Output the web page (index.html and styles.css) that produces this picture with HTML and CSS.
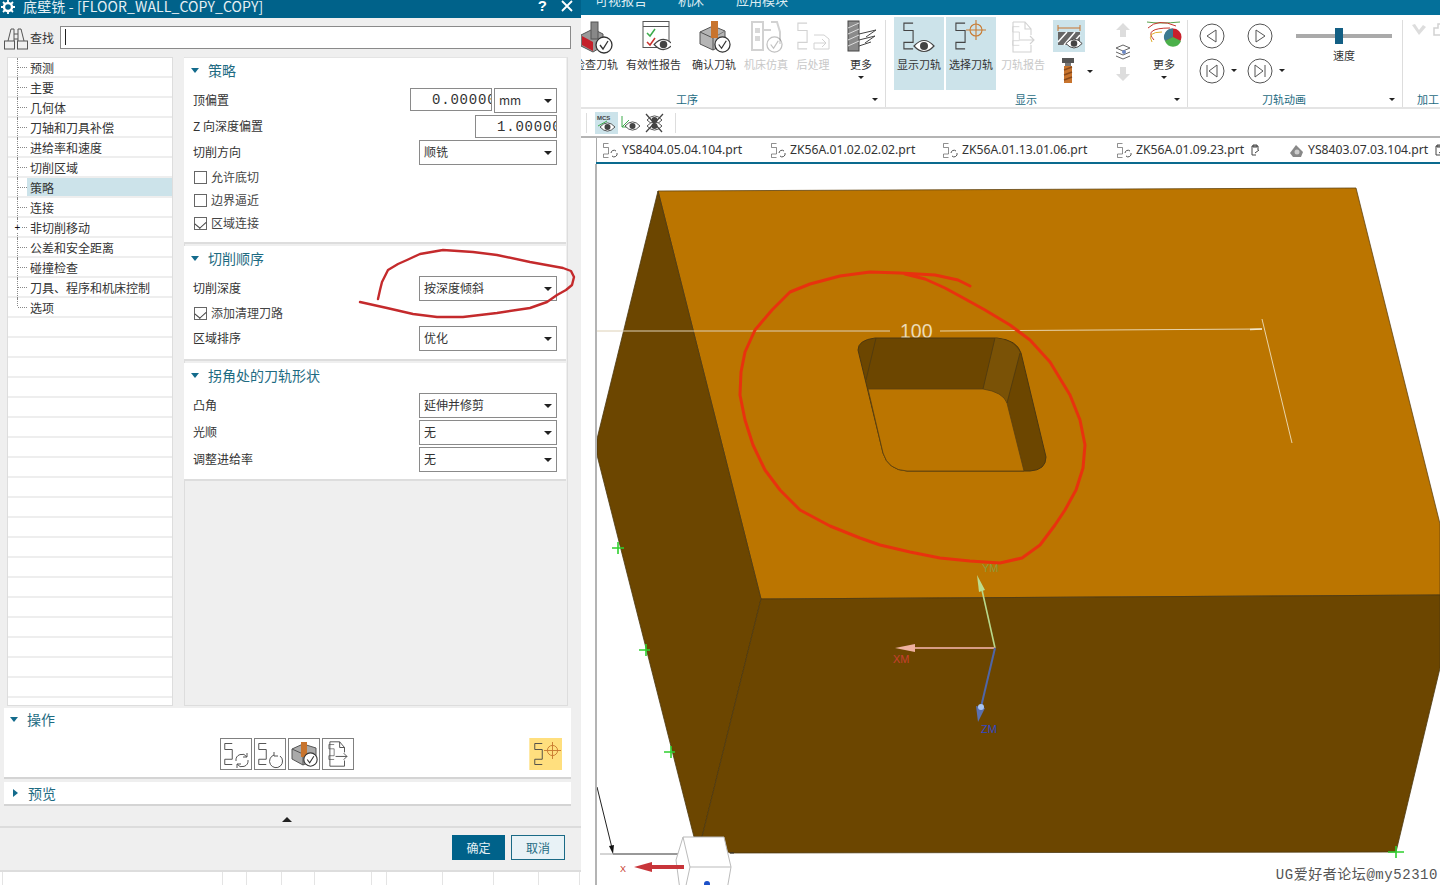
FILE: index.html
```html
<!DOCTYPE html>
<html lang="zh">
<head>
<meta charset="utf-8">
<title>底壁铣</title>
<link rel="stylesheet" href="styles.css">
</head>
<body>
<svg class="defs" width="0" height="0" aria-hidden="true">
  <symbol id="zz" viewBox="0 0 12 30"><path d="M11 1H1V9H11V22H1V29H11" fill="none" stroke="currentColor" stroke-width="1.2"/></symbol>
  <symbol id="eye" viewBox="0 0 22 16"><path d="M1 8Q11-3 21 8 11 19 1 8Z" fill="#fff" stroke="#444" stroke-width="1.2"/><circle cx="11" cy="8" r="4" fill="#444"/></symbol>
  <symbol id="chk" viewBox="0 0 18 18"><circle cx="9" cy="9" r="8" fill="#fff" stroke="#333" stroke-width="1.3"/><path d="M5 9l3 4 5-8" fill="none" stroke="#333" stroke-width="1.3"/></symbol>
  <symbol id="cross" viewBox="0 0 20 20"><circle cx="10" cy="10" r="6" fill="none" stroke="#c87a30" stroke-width="1.1"/><path d="M0 10H20M10 0V20" stroke="#c87a30" stroke-width="1.1"/></symbol>
  <symbol id="doc" viewBox="0 0 26 32"><path d="M3 1H15L21 8V14M3 1V31H21V24M15 1V8H21M10 19H24M20 15l4 4-4 4" fill="none" stroke="currentColor" stroke-width="1.1"/></symbol>
  <symbol id="mill" viewBox="0 0 14 26"><rect x="1" y="0" width="12" height="5" fill="#555"/><rect x="4" y="5" width="6" height="3" fill="#777"/><rect x="3" y="8" width="8" height="17" fill="#c8742e"/><path d="M3 12l8-3M3 17l8-3M3 22l8-3" stroke="#8a4a1a" stroke-width="1.4"/></symbol>
</svg>

<div class="app">
  <section class="dialog">
    <header class="dlg-title">
      <svg class="gear" viewBox="0 0 14 14" width="14" height="14"><circle cx="7" cy="7" r="4" fill="none" stroke="#fff" stroke-width="2.4"/><path d="M7 0V3M7 11V14M0 7H3M11 7H14M2 2L4 4M10 10L12 12M12 2L10 4M4 10L2 12" stroke="#fff" stroke-width="1.8"/></svg>
      <span class="dlg-name">底壁铣 - [FLOOR_WALL_COPY_COPY]</span>
      <span class="dlg-help">?</span>
      <svg class="dlg-x" viewBox="0 0 12 12" width="12" height="12"><path d="M1 1L11 11M11 1L1 11" stroke="#fff" stroke-width="1.8"/></svg>
    </header>

    <div class="find">
      <svg viewBox="0 0 24 24" width="24" height="24"><path d="M4 15L7 3H10V15M14 15V3H17L20 15M10 8H14M10 13H14" fill="none" stroke="#555"/><rect x=".5" y="15" width="10" height="8" fill="none" stroke="#555"/><rect x="13.500" y="15" width="10" height="8" fill="none" stroke="#555"/></svg>
      <span class="find-label">查找</span>
      <div class="find-input"><i class="caret-bar"></i></div>
    </div>

    <div class="dlg-main">
      <ul class="tree">
        <li><i class="twig"></i><span>预测</span></li>
        <li><i class="twig"></i><span>主要</span></li>
        <li><i class="twig"></i><span>几何体</span></li>
        <li><i class="twig"></i><span>刀轴和刀具补偿</span></li>
        <li><i class="twig"></i><span>进给率和速度</span></li>
        <li><i class="twig"></i><span>切削区域</span></li>
        <li class="sel"><i class="twig"></i><span>策略</span></li>
        <li><i class="twig"></i><span>连接</span></li>
        <li><i class="twig"><b class="plus">+</b></i><span>非切削移动</span></li>
        <li><i class="twig"></i><span>公差和安全距离</span></li>
        <li><i class="twig"></i><span>碰撞检查</span></li>
        <li><i class="twig"></i><span>刀具、程序和机床控制</span></li>
        <li><i class="twig end"></i><span>选项</span></li>
        <li></li><li></li><li></li><li></li><li></li><li></li><li></li><li></li><li></li><li></li>
        <li></li><li></li><li></li><li></li><li></li><li></li><li></li><li></li><li></li><li></li>
      </ul>

      <div class="panel">
        <section class="sec sec-a">
          <h3 class="sec-title"><i class="tri-d"></i>策略</h3>
          <div class="row"><label>顶偏置</label><div class="pair"><div class="num num-a">0.00000</div><div class="sel-box unit"><span>mm</span><i class="tri-s"></i></div></div></div>
          <div class="row"><label>Z 向深度偏置</label><div class="num">1.00000</div></div>
          <div class="row"><label>切削方向</label><div class="sel-box"><span>顺铣</span><i class="tri-s"></i></div></div>
          <div class="checks">
            <div class="check"><i class="cb"></i><span>允许底切</span></div>
            <div class="check"><i class="cb"></i><span>边界逼近</span></div>
            <div class="check"><i class="cb on"></i><span>区域连接</span></div>
          </div>
        </section>
        <section class="sec sec-b">
          <h3 class="sec-title"><i class="tri-d"></i>切削顺序</h3>
          <div class="row"><label>切削深度</label><div class="sel-box"><span>按深度倾斜</span><i class="tri-s"></i></div></div>
          <div class="check tall"><i class="cb on"></i><span>添加清理刀路</span></div>
          <div class="row flush"><label>区域排序</label><div class="sel-box"><span>优化</span><i class="tri-s"></i></div></div>
        </section>
        <section class="sec sec-c">
          <h3 class="sec-title"><i class="tri-d"></i>拐角处的刀轨形状</h3>
          <div class="row"><label>凸角</label><div class="sel-box"><span>延伸并修剪</span><i class="tri-s"></i></div></div>
          <div class="row"><label>光顺</label><div class="sel-box"><span>无</span><i class="tri-s"></i></div></div>
          <div class="row"><label>调整进给率</label><div class="sel-box"><span>无</span><i class="tri-s"></i></div></div>
        </section>
      </div>
    </div>

    <section class="ops">
      <h3 class="sec-title"><i class="tri-d"></i>操作</h3>
      <div class="op-row">
        <div class="op-icons">
          <div class="op"><svg viewBox="0 0 30 30" width="30" height="30"><use href="#zz" x="3" y="3" width="9" height="24" color="#444"/><path d="M15 22A6 6 0 0 1 26 18M27 21A6 6 0 0 1 16 25M26 14V18H22M16 29V25H20" fill="none" stroke="#555"/></svg></div>
          <div class="op"><svg viewBox="0 0 30 30" width="30" height="30"><use href="#zz" x="3" y="3" width="9" height="24" color="#444"/><path d="M25 17A6.500 6.500 0 1 1 19 16M19 13V17H23" fill="none" stroke="#555"/></svg></div>
          <div class="op"><svg viewBox="0 0 30 30" width="30" height="30"><path d="M3 10L14 5 27 9V20L14 26 3 20Z" fill="#aaa" stroke="#555"/><path d="M3 10L14 15V26" fill="none" stroke="#555"/><rect x="12" y="3" width="6" height="15" fill="#c8742e"/><use href="#chk" x="14" y="13" width="15" height="15"/></svg></div>
          <div class="op"><svg viewBox="0 0 30 30" width="30" height="30"><use href="#doc" x="3" y="2" width="24" height="26" color="#444"/><use href="#zz" x="5" y="5" width="7" height="16" color="#444"/></svg></div>
        </div>
        <div class="op-pick"><svg viewBox="0 0 30 30" width="30" height="30"><use href="#zz" x="3" y="3" width="9" height="24" color="#444"/><use href="#cross" x="13" y="3" width="17" height="17"/></svg></div>
      </div>
    </section>
    <section class="preview">
      <h3 class="sec-title"><i class="tri-r"></i>预览</h3>
    </section>
    <div class="collapse"><i class="tri-u"></i></div>
    <footer class="dlg-foot">
      <button class="btn ok">确定</button>
      <button class="btn cancel">取消</button>
    </footer>
    <div class="strip"><i></i><i></i><i></i><i></i><i></i><i></i><i></i><i></i><i></i><i></i><i></i></div>
  </section>

  <main class="work">
    <nav class="topbar"><span>可视报告</span><span>机床</span><span>应用模块</span></nav>

    <div class="ribbon">
      <section class="group g1">
        <div class="btns">
          <div class="rb first">
            <svg class="ic" viewBox="0 0 34 34"><path d="M2 15L14 9 24 14V26L14 32 2 26Z" fill="#999" stroke="#555"/><path d="M3 16L14 22V31L3 25Z" fill="#c4202a"/><rect x="12" y="2" width="7" height="17" fill="#888" stroke="#555"/><use href="#chk" x="16" y="16" width="18" height="18"/></svg>
            <span>检查刀轨</span>
          </div>
          <div class="rb">
            <svg class="ic" viewBox="0 0 34 34"><rect x="6" y="1.500" width="26" height="26" fill="#fff" stroke="#555"/><path d="M6 6.500H32" stroke="#555"/><path d="M10 13l3 3 5-7" fill="none" stroke="#3cab4a" stroke-width="1.500"/><path d="M10 22l3 3 5-7" fill="none" stroke="#c9302c" stroke-width="1.500"/><use href="#eye" x="16" y="17" width="21" height="15"/></svg>
            <span>有效性报告</span>
          </div>
          <div class="rb m3">
            <svg class="ic" viewBox="0 0 34 34"><path d="M3 12L16 6 28 11V24L16 30 3 24Z" fill="#b5b5b5" stroke="#555"/><path d="M3 12L16 18V30" fill="none" stroke="#555"/><path d="M16 18L28 11" stroke="#777"/><rect x="14" y="1" width="7" height="17" fill="#c8742e"/><use href="#chk" x="17" y="16" width="17" height="17"/></svg>
            <span>确认刀轨</span>
          </div>
          <div class="rb off">
            <svg class="ic" viewBox="0 0 34 34"><path d="M3 2H14V30H3ZM14 10H22M22 2H28L31 12V24" fill="none" stroke="#d2d2d2" stroke-width="2"/><rect x="6" y="8" width="5" height="5" fill="#d8d8d8"/><rect x="6" y="16" width="5" height="5" fill="#d8d8d8"/><use href="#chk" x="17" y="16" width="17" height="17" opacity=".3"/></svg>
            <span>机床仿真</span>
          </div>
          <div class="rb off">
            <svg class="ic" viewBox="0 0 34 34"><use href="#zz" x="1" y="1" width="11" height="30" color="#d2d2d2"/><path d="M18 17H28L33 21V31H18V25M18 25H30M26 21l4 4-4 4" transform="translate(0 -2)" fill="none" stroke="#d2d2d2"/></svg>
            <span>后处理</span>
          </div>
          <div class="rb more">
            <svg class="ic" viewBox="0 0 34 34"><rect x="4" y="1" width="11" height="30" fill="#8b8b8b" stroke="#444"/><path d="M4 8L15 3M4 14L15 9M4 20L15 15M4 26L15 21" stroke="#ddd"/><path d="M15 14L32 10 22 17M15 20L31 16 21 23M15 26L27 22" fill="none" stroke="#444"/></svg>
            <span>更多</span><i class="tri-s"></i>
          </div>
        </div>
        <div class="foot"><span class="ft-1">工序</span><i class="tri-s"></i></div>
      </section>

      <section class="group g2">
        <div class="btns">
          <div class="rb on">
            <svg class="ic" viewBox="0 0 34 34"><use href="#zz" x="1" y="1" width="11" height="30" color="#444"/><use href="#eye" x="11" y="18" width="22" height="16"/></svg>
            <span>显示刀轨</span>
          </div>
          <div class="rb on">
            <svg class="ic" viewBox="0 0 34 34"><use href="#zz" x="1" y="1" width="11" height="30" color="#444"/><use href="#cross" x="12" y="0" width="20" height="20"/></svg>
            <span>选择刀轨</span>
          </div>
          <div class="rb off">
            <svg class="ic" viewBox="0 0 34 34"><use href="#doc" x="3" y="1" width="28" height="32" color="#d2d2d2"/><use href="#zz" x="6" y="6" width="8" height="20" color="#d2d2d2"/></svg>
            <span>刀轨报告</span>
          </div>
          <div class="stack">
            <div class="view-on"><svg viewBox="0 0 32 32" width="32" height="32"><path d="M5 8H27M5 5V11M27 5V11" stroke="#c8742e"/><rect x="5" y="12" width="22" height="13" fill="#666"/><path d="M5 22L14 12M11 25L22 12M18 25L27 15" stroke="#fff" stroke-width="1.500"/><use href="#eye" x="12" y="17" width="18" height="13"/></svg></div>
            <div class="drill"><svg viewBox="0 0 14 26" width="14" height="26"><use href="#mill" width="14" height="26"/></svg><i class="tri-s"></i></div>
          </div>
          <div class="arrows">
            <svg viewBox="0 0 16 16" width="16" height="16"><path d="M8 1L15 8H11V15H5V8H1Z" fill="#ddd"/></svg>
            <svg viewBox="0 0 16 16" width="16" height="16"><path d="M8 1L15 4 8 7 1 4ZM1 8L8 11 15 8M1 12L8 15 15 12" fill="none" stroke="#666"/><circle cx="9" cy="8" r="2" fill="#6d89c4"/></svg>
            <svg viewBox="0 0 16 16" width="16" height="16"><path d="M8 15L15 8H11V1H5V8H1Z" fill="#ddd"/></svg>
          </div>
          <div class="rb more">
            <svg class="ic wide" viewBox="0 0 36 34"><path d="M1 2Q14 4 34 2" fill="none" stroke="#5aa04a"/><path d="M2 8Q12-2 30 6M8 20Q-3 8 24 8" fill="none" stroke="#c8362e"/><path d="M6 22Q0 12 16 12" fill="none" stroke="#e0b030"/><circle cx="27" cy="17" r="8.500" fill="#c8202a"/><path d="M27 17V8.500A8.500 8.500 0 0 0 19 21Z" fill="#3c7a90"/><path d="M27 17L19 21A8.500 8.500 0 0 0 35 21Z" fill="#4ab04a"/></svg>
            <span>更多</span><i class="tri-s"></i>
          </div>
        </div>
        <div class="foot"><span class="ft-2">显示</span><i class="tri-s"></i></div>
      </section>

      <section class="group g3">
        <div class="btns anim">
          <div class="players">
            <div class="play"><svg viewBox="0 0 26 26" width="26" height="26"><circle cx="13" cy="13" r="12" fill="none" stroke="#555"/><path d="M8 13L17 7V19Z" fill="none" stroke="#555"/></svg></div>
            <div class="play"><svg viewBox="0 0 26 26" width="26" height="26"><circle cx="13" cy="13" r="12" fill="none" stroke="#555"/><path d="M18 13L9 7V19Z" fill="none" stroke="#555"/></svg></div>
            <div class="play"><svg viewBox="0 0 26 26" width="26" height="26"><circle cx="13" cy="13" r="12" fill="none" stroke="#555"/><path d="M10 13L18 7V19ZM8 7V19" fill="none" stroke="#555"/></svg><i class="tri-s"></i></div>
            <div class="play"><svg viewBox="0 0 26 26" width="26" height="26"><circle cx="13" cy="13" r="12" fill="none" stroke="#555"/><path d="M16 13L8 7V19ZM18 7V19" fill="none" stroke="#555"/></svg><i class="tri-s"></i></div>
          </div>
          <div class="speed">
            <div class="slider"><i class="thumb"></i></div>
            <span>速度</span>
          </div>
        </div>
        <div class="foot"><span class="ft-3">刀轨动画</span><i class="tri-s"></i></div>
      </section>

      <section class="group g4">
        <div class="btns mach">
          <svg viewBox="0 0 16 16" width="16" height="16"><path d="M1 3L8 13 15 5 12 3 8 8 4 2Z" fill="#ddd"/></svg>
          <svg viewBox="0 0 16 16" width="16" height="16"><path d="M5 2H15V9H12V13H1V6H5Z" fill="none" stroke="#d2d2d2" stroke-width="1.500"/></svg>
        </div>
        <div class="foot"><span class="ft-4">加工</span></div>
      </section>
    </div>

    <div class="toolbar">
      <i class="tb-sep"></i>
      <div class="tb-ic on"><svg viewBox="0 0 22 22" width="22" height="22"><text x="2" y="8" class="mcs">MCS</text><use href="#eye" x="4" y="9" width="17" height="12"/><path d="M3 14L12 9" stroke="#3cab4a"/></svg></div>
      <div class="tb-ic"><svg viewBox="0 0 22 22" width="22" height="22"><path d="M3 4V15H14M3 15L10 8" fill="none" stroke="#3cab4a"/><use href="#eye" x="5" y="8" width="17" height="12"/></svg></div>
      <div class="tb-ic"><svg viewBox="0 0 22 22" width="22" height="22"><use href="#eye" x="3" y="2" width="17" height="12"/><use href="#eye" x="3" y="8" width="17" height="12"/><path d="M3 2L19 20M20 2L3 20" stroke="#444" stroke-width="1.300"/></svg></div>
      <i class="tb-sep"></i>
    </div>

    <div class="tabs">
      <div class="tab"><svg class="t-ic" viewBox="0 0 15 15" width="15" height="15"><use href="#zz" x="0" y="0" width="6" height="15" color="#444"/><path d="M8 10A3 3 0 0 1 13 8M14 10A3 3 0 0 1 9 13" fill="none" stroke="#555"/></svg><span>YS8404.05.04.104.prt</span></div>
      <div class="tab"><svg class="t-ic" viewBox="0 0 15 15" width="15" height="15"><use href="#zz" x="0" y="0" width="6" height="15" color="#444"/><path d="M8 10A3 3 0 0 1 13 8M14 10A3 3 0 0 1 9 13" fill="none" stroke="#555"/></svg><span>ZK56A.01.02.02.02.prt</span></div>
      <div class="tab"><svg class="t-ic" viewBox="0 0 15 15" width="15" height="15"><use href="#zz" x="0" y="0" width="6" height="15" color="#444"/><path d="M8 10A3 3 0 0 1 13 8M14 10A3 3 0 0 1 9 13" fill="none" stroke="#555"/></svg><span>ZK56A.01.13.01.06.prt</span></div>
      <div class="tab"><svg class="t-ic" viewBox="0 0 15 15" width="15" height="15"><use href="#zz" x="0" y="0" width="6" height="15" color="#444"/><path d="M8 10A3 3 0 0 1 13 8M14 10A3 3 0 0 1 9 13" fill="none" stroke="#555"/></svg><span>ZK56A.01.09.23.prt</span><svg class="t-doc" viewBox="0 0 10 12" width="10" height="12"><path d="M2 2H8V6M2 2V11H6M3 1H7V3H3ZM5 9L9 6" fill="none" stroke="#444"/></svg></div>
      <div class="tab"><svg class="t-ic" viewBox="0 0 15 15" width="15" height="15"><path d="M1 10L7 2 14 9 12 14 4 14Z" fill="#888"/><circle cx="8" cy="9" r="2.500" fill="#ccc"/></svg><span>YS8403.07.03.104.prt</span><svg class="t-doc" viewBox="0 0 10 12" width="10" height="12"><path d="M2 2H8V6M2 2V11H6M3 1H7V3H3ZM5 9L9 6" fill="none" stroke="#444"/></svg></div>
    </div>

    <div class="canvas">
      <svg class="model" viewBox="595 164 845 721" width="845" height="721">
        <polygon points="658,191 1356,188 1440,524 1440,595 761,599" fill="#bb7500" stroke="#5f4310" stroke-width=".8"/>
        <polygon points="658,191 761,599 702,837 694,837 597,455 597,439" fill="#6c4600" stroke="#4d3810" stroke-width=".8"/>
        <polygon points="761,599 1440,595 1440,668 1396,852 730,853 702,837" fill="#6c4600" stroke="#4d3810" stroke-width=".8"/>
        <path d="M597 331H890" stroke="#ddd0b5" stroke-width="1"/>
        <path d="M940 331L1262 329" stroke="#e8d4aa" stroke-width="1"/>
        <path d="M1250 329.500L1262 329" stroke="#f2e6cc" stroke-width="1.500"/>
        <path d="M1262 319L1292 443" stroke="#e8d4aa" stroke-width="1"/>
        <text x="900" y="338" class="dim">100</text>
        <path d="M858 350Q858 340 875 338H997Q1017 340 1021 353L1046 457Q1046 470 1030 471H907Q888 470 883 453Z" fill="#6c4600" stroke="#4d3810"/>
        <path d="M995 338Q1015 340 1020 353L1007 403Q1003 392 983 389Z" fill="#7a5206"/>
        <path d="M868 389H983Q1003 392 1007 403L1024 471H907Q888 470 883 453Z" fill="#bb7500" stroke="#5a4010" stroke-width=".8"/>
        <path d="M876 338L866 380M995 338L983 389M1020 353L1007 403" stroke="#4d3810" stroke-width=".8"/>
        <path d="M995 648L982 590" stroke="#b8d88a" stroke-width="1.600"/>
        <path d="M977 575L985 590 979 592Z" fill="#bddc8c"/>
        <path d="M995 648H915" stroke="#d69c84" stroke-width="1.800"/>
        <path d="M895 648L915 644V652Z" fill="#eeb0a0"/>
        <path d="M995 648L981 707" stroke="#4f66a8" stroke-width="2"/>
        <path d="M978 722L976 706 985 708Z" fill="#5a70b0"/>
        <circle cx="981" cy="707" r="3" fill="#a8c4f0"/>
        <text x="982" y="572" class="ax ax-y">YM</text>
        <text x="893" y="663" class="ax ax-x">XM</text>
        <text x="981" y="733" class="ax ax-z">ZM</text>
        <path d="M612 548H624M618 542V554M639 650H650M646 644V656M664 752H675M671 746V758M1388 852H1404M1396 846V858" stroke="#2fd02f" stroke-width="1.600"/>
        <path d="M600 854H613" stroke="#aaa"/>
        <path d="M613 854H680" stroke="#333"/>
        <path d="M730 853H734" stroke="#333"/>
        <path d="M597 787L612 848" stroke="#222"/>
        <path d="M613 854L609 846 614 845Z" fill="#111"/>
        <polygon points="683,837 724,837 731,867 727,890 680,890 676,860" fill="#fff" stroke="#bbb"/>
        <path d="M683 837L690 867 685 890M690 867H731" fill="none" stroke="#bbb"/>
        <path d="M684 867H651" stroke="#c8353a" stroke-width="4"/>
        <path d="M634 867L652 862V872Z" fill="#c8353a"/>
        <text x="620" y="872" class="ax ax-small">X</text>
        <circle cx="707" cy="884" r="3" fill="#1c50c8"/>
      </svg>
      <div class="mark">UG爱好者论坛@my52310</div>
    </div>
  </main>
</div>

<svg class="ink" viewBox="0 0 1440 885" width="1440" height="885" aria-hidden="true">
  <path class="ink-a" d="M378 299L380 290 382 282 388 270 398 264 407 260 420 254 443 250 473 252 497 255 530 262 563 268 571 271 574 277 572 285 566 290 557 295 547 302 530 308 497 313 463 317 437 317 413 314 387 308 360 302"/>
  <path class="ink-b" d="M970 286L958 280 935 275 900 273 870 272 840 276 810 284 790 292 772 310 755 330 745 352 741 372 740 395 745 420 753 445 765 470 780 490 800 510 830 526 860 538 880 545 910 552 940 558 970 561 1000 563 1022 558 1040 545 1055 525 1065 510 1076 490 1083 468 1085 445 1080 420 1070 395 1050 362 1030 340 1010 325 985 310 967 300 945 288 925 279 905 274"/>
</svg>
</body>
</html>
```
FILE: styles.css
```css
* { box-sizing: border-box; }
html, body { margin: 0; height: 885px; overflow: hidden; background: #fff; }
body { font: 12px/16px "Noto Sans CJK SC", "Noto Sans", sans-serif; color: #333; position: relative; }
i, b { font-style: normal; font-weight: normal; }
.defs { position: absolute; }
.app { display: flex; height: 885px; }

/* dialog */
.dialog { width: 581px; flex: none; display: flex; flex-direction: column; background: #efefef; }
.dlg-title { height: 18px; flex: none; background: #00628a; color: #fff; display: flex; align-items: center; padding: 0 8px 0 1px; overflow: hidden; }
.gear { margin: -5px 0 0 0; flex: none; }
.dlg-name { margin: -6px 0 0 8px; font-size: 14px; line-height: 18px; flex: 1; color: #e6f0f4; letter-spacing: .13px; }
.dlg-help { font: bold 15px/18px "Liberation Sans", sans-serif; margin: -6px 14px 0 0; }
.dlg-x { margin-top: -6px; }
.find { height: 39px; flex: none; display: flex; align-items: center; padding: 0 10px 0 4px; }
.find-label { margin: 0 6px 0 2px; width: 24px; }
.find-input { flex: 1; height: 23px; background: #fff; border: 1px solid #8a8a8a; padding: 2px 4px; }
.caret-bar { display: block; width: 1px; height: 16px; background: #222; }

.dlg-main { height: 649px; flex: none; display: flex; padding-left: 7px; }
.tree { list-style: none; margin: 0; padding: 0; width: 166px; height: 649px; overflow: hidden; background: #fff; border: 1px solid #ddd; flex: none; }
.tree li { height: 20px; display: flex; border-bottom: 2px solid #eee; position: relative; }
.tree li span { flex: 1; line-height: 19px; padding-left: 3px; }
.tree .sel { border-bottom-color: #eee; }
.tree .sel span { background: #cce3ea; }
.twig { width: 10px; margin-left: 9px; margin-bottom: -2px; flex: none; border-left: 1px dotted #888; position: relative; }
.twig::after { content: ""; position: absolute; left: 0; right: 0; top: 9px; border-top: 1px dotted #888; }
.twig.end { margin-bottom: 10px; }
.plus { position: absolute; left: -5px; top: 5px; width: 9px; height: 9px; background: #fff; font: 10px/9px "Liberation Sans", sans-serif; text-align: center; z-index: 1; color: #111; }

.panel { margin-left: 11px; width: 384px; height: 649px; border: 1px solid #ddd; border-top-color: #e4e4e4; display: flex; flex-direction: column; gap: 2px; background: #efefef; }
.sec { background: #fff; padding: 0 9px 0 8px; border-bottom: 2px solid #ddd; width: 382px; margin-left: -1px; }
.sec-a { padding-bottom: 7px; }
.sec-b { padding-bottom: 8px; }
.sec-c { padding-bottom: 7px; }
.sec-title { margin: 0; height: 26px; padding: 0 0 2px; font-size: 14px; font-weight: normal; color: #1e6b82; display: flex; align-items: center; gap: 9px; }
.sec-title + .row { margin-top: 4px; }
.tri-d { width: 0; height: 0; border: 4.500px solid transparent; border-top: 5px solid #136b8c; border-bottom: 0; margin-left: -1px; }
.tri-r { width: 0; height: 0; border: 4.500px solid transparent; border-left: 5px solid #136b8c; border-right: 0; margin-left: 2px; margin-right: 1px; }
.tri-u { display: block; width: 0; height: 0; border: 5px solid transparent; border-bottom: 5px solid #222; border-top: 0; }
.tri-s { display: block; width: 0; height: 0; border: 4px solid transparent; border-top: 4px solid #222; border-bottom: 0; flex: none; }
.row { display: flex; justify-content: space-between; align-items: center; margin-top: 2px; }
.row label { padding: 0 0 2px 1px; }
.row.flush { margin-top: 0; }
.pair { display: flex; gap: 2px; align-items: flex-start; }
.num { width: 82px; height: 23px; background: #fff; border: 1px solid #8a8a8a; font: 14px/22px "Liberation Mono", monospace; letter-spacing: .8px; color: #333; padding-left: 21px; overflow: hidden; white-space: nowrap; }
.num-a { width: 82px; }
.sel-box { width: 138px; height: 25px; background: #fff; border: 1px solid #8a8a8a; display: flex; align-items: center; justify-content: space-between; padding: 0 4px 0 4px; }
.sel-box span { padding-bottom: 1px; }
.sel-box.unit { width: 63px; }
.checks { margin-top: 1px; }
.check { height: 23px; display: flex; align-items: center; gap: 4px; padding-left: 2px; color: #444; }
.check span { padding-bottom: 2px; }
.check.tall { height: 25px; }
.cb { width: 13px; height: 13px; border: 1px solid #666; background: #fff; position: relative; flex: none; }
.cb.on::after { content: ""; position: absolute; left: 2px; top: 1px; width: 6px; height: 8px; border: solid #444; border-width: 0 1.300px 1.300px 0; transform: rotate(40deg) skewX(-8deg); }

.ops { margin: 2px 10px 0 4px; height: 71px; background: #fff; border-bottom: 2px solid #d4d4d4; padding: 0 9px 0 7px; flex: none; }
.ops .sec-title { height: 26px; padding-bottom: 4px; }
.op-row { display: flex; justify-content: space-between; margin-top: 4px; }
.op-icons { display: flex; gap: 2px; margin-left: 209px; }
.op { width: 32px; height: 32px; border: 1px solid #808080; background: #fff; }
.op svg, .op-pick svg { display: block; }
.op-pick { width: 33px; height: 32px; background: #ffdf7e; padding: 1px; border-left: 1px solid #ffe9a6; }
.preview { margin: 3px 10px 0 4px; height: 24px; background: #fff; border-bottom: 2px solid #d4d4d4; padding-left: 7px; flex: none; }
.preview .sec-title { height: 25px; padding-bottom: 4px; }
.collapse { height: 20px; flex: none; display: flex; justify-content: center; align-items: center; padding: 7px 7px 0 0; }
.dlg-foot { height: 44px; flex: none; border-top: 2px solid #dcdcdc; display: flex; justify-content: flex-end; gap: 6px; padding: 7px 16px 0 0; }
.btn { width: 54px; height: 25px; font: 12px/16px "Noto Sans CJK SC", sans-serif; padding: 0; }
.ok { background: #00628a; color: #e4f0f4; border: 1px solid #00628a; width: 53px; }
.cancel { background: #e8f2f6; color: #1e6b82; border: 1px solid #1a6a86; }
.strip { flex: 1; background: #fff; border-top: 2px solid #ddd; display: flex; }
.strip i { width: 1px; background: #e4e4e4; }
.strip i:nth-child(1) { margin-left: 2px; }
.strip i:nth-child(2) { margin-left: 219px; }
.strip i:nth-child(3) { margin-left: 23px; }
.strip i:nth-child(4) { margin-left: 34px; }
.strip i:nth-child(5) { margin-left: 32px; }
.strip i:nth-child(6) { margin-left: 56px; }
.strip i:nth-child(7) { margin-left: 14px; }
.strip i:nth-child(8) { margin-left: 55px; }
.strip i:nth-child(9) { margin-left: 50px; }
.strip i:nth-child(10) { margin-left: 44px; }
.strip i:nth-child(11) { margin-left: 40px; }

/* work area */
.work { width: 859px; flex: none; display: flex; flex-direction: column; overflow: hidden; }
.topbar { height: 15px; flex: none; background: #04709a; color: #dcecf2; display: flex; overflow: hidden; padding-left: 14px; }
.topbar span { font-size: 13px; line-height: 16px; margin-top: -8px; }
.topbar span:nth-child(2) { margin-left: 31px; }
.topbar span:nth-child(3) { margin-left: 32px; }

.ribbon { height: 94px; flex: none; display: flex; border-bottom: 2px solid #e4e4e4; overflow: hidden; font-size: 11px; }
.group { flex: none; display: flex; flex-direction: column; position: relative; }
.g1 { width: 304px; overflow: hidden; }
.g2 { width: 302px; border-left: 1px solid #ddd; margin-top: 5px; padding-top: 0; }
.g3 { width: 215px; border-left: 1px solid #ddd; margin-top: 5px; }
.g4 { flex: 1; border-left: 1px solid #ddd; margin-top: 5px; }
.g1 { margin-top: 5px; }
.btns { height: 71px; display: flex; flex: none; margin-top: -3px; }
.rb { display: flex; flex-direction: column; align-items: center; padding: 3px 4px 0; height: 73px; color: #333; flex: none; white-space: nowrap; }
.rb span { line-height: 14px; margin-top: 3px; }
.ic { width: 34px; height: 34px; display: block; flex: none; }
.ic.wide { width: 36px; }
.rb > .tri-s { margin-top: 5px; }
.ribbon .tri-s { border-width: 3.500px; border-bottom: 0; }
.rb.first { margin-left: -11px; }
.rb.m3 { margin-left: 3px; }
.g1 .rb.more { margin-left: 1px; margin-right: 0; width: 52px; }
.rb.off { color: #c8c8c8; }
.rb.on { background: #cce3ea; width: 50px; margin-right: 2px; }
.g2 .btns { padding-left: 8px; }
.g2 .rb.off { margin-left: -1px; padding: 3px 4px 0; }
.stack { width: 38px; margin-left: 4px; display: flex; flex-direction: column; padding-top: 3px; }
.view-on { width: 32px; height: 32px; background: #cce3ea; }
.view-on svg { display: block; }
.drill { display: flex; align-items: center; gap: 12px; margin: 6px 0 0 8px; }
.drill svg { display: block; flex: none; }
.arrows { width: 16px; margin-left: 24px; display: flex; flex-direction: column; gap: 6px; padding-top: 5px; }
.arrows svg { display: block; }
.g2 .rb.more { margin-left: 11px; width: 44px; }
.foot { height: 18px; display: flex; align-items: center; color: #1e6b82; font-size: 11px; padding-right: 7px; margin-top: 3px; }
.foot .tri-s { margin-left: auto; }
.ft-1 { margin-left: 95px; }
.ft-2 { margin-left: 129px; }
.ft-3 { margin-left: 74px; }
.ft-4 { margin-left: 14px; }

.anim { padding: 1px 0 0 11px; }
.players { width: 96px; display: grid; grid-template-columns: 48px 48px; grid-auto-rows: 35px; }
.play { display: flex; align-items: center; gap: 6px; }
.play svg { display: block; flex: none; }
.speed { margin-left: 1px; display: flex; flex-direction: column; align-items: center; width: 96px; }
.slider { width: 96px; height: 4px; background: #aaa; margin-top: 16px; position: relative; }
.thumb { position: absolute; left: 39px; top: -6px; width: 8px; height: 16px; background: #135f84; }
.speed span { margin-top: 10px; line-height: 14px; margin-left: 0; }
.mach { padding: 5px 0 0 8px; gap: 6px; }

.toolbar { height: 27px; flex: none; display: flex; align-items: center; padding-left: 5px; background: #fff; }
.tb-sep { width: 1px; height: 20px; background: #ddd; }
.tb-sep:first-child { margin-right: 8px; }
.tb-sep:last-child { margin-left: 8px; }
.tb-ic { width: 23px; height: 22px; margin-right: 1px; }
.tb-ic svg { display: block; }
.tb-ic.on { background: #cce3ea; }
.mcs { font: bold 6px "Liberation Sans", sans-serif; fill: #444; }

.tabs { height: 28px; flex: none; border-top: 2px solid #b4b4b4; display: grid; grid-template-columns: 168px 172px 174px 172px 1fr; padding: 0 0 2px 22px; position: relative; font: 12.2px/16px "Noto Sans", sans-serif; color: #333; overflow: hidden; }
.tabs::before { content: ""; position: absolute; left: 15px; top: 0; bottom: 0; width: 1px; background: #aaa; }
.tabs::after { content: ""; position: absolute; left: 15px; right: 0; bottom: 0; height: 2px; background: #0a6a8e; }
.tab { display: flex; align-items: center; white-space: nowrap; }
.t-ic { margin-right: 4px; flex: none; }
.t-doc { margin-left: 6px; flex: none; }

.canvas { flex: 1; position: relative; border-left: 0; padding-left: 14px; overflow: hidden; }
.canvas::before { content: ""; position: absolute; left: 14px; top: 0; bottom: 0; width: 2px; background: #b4b4b4; }
.model { display: block; }
.dim { font: 19.500px "Liberation Sans", sans-serif; fill: #ecdcb8; }
.ax { font: 11px "Liberation Sans", sans-serif; }
.ax-y { fill: #8f9a3a; }
.ax-x { fill: #c84030; }
.ax-z { fill: #3048c8; }
.ax-small { font-size: 9px; fill: #c84030; }
.mark { position: absolute; right: 2px; bottom: 1px; font: 14px/18px "Liberation Mono", "Noto Sans CJK SC", monospace; letter-spacing: .55px; color: #555; }

/* pen marks over everything */
.ink { position: absolute; left: 0; top: 0; pointer-events: none; }
.ink path { fill: none; stroke-linejoin: round; stroke-linecap: round; }
.ink-a { stroke: #c42a2c; stroke-width: 2.400; }
.ink-b { stroke: #e8320e; stroke-width: 3; }
```
